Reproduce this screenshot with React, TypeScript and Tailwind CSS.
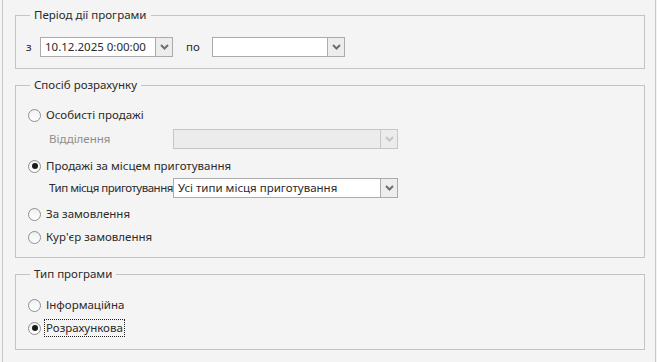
import React from "react";

const font = { fontFamily: '"Noto Sans", "Segoe UI", sans-serif' };

function Chevron({ disabled }: { disabled?: boolean }) {
  return (
    <svg width="9" height="6" viewBox="0 0 9 6">
      <path
        d="M1 1 L4.5 4.5 L8 1"
        fill="none"
        stroke={disabled ? "#c4c4c4" : "#6e6e6e"}
        strokeWidth="2"
      />
    </svg>
  );
}

function Combo({
  value,
  width,
  disabled,
}: {
  value?: string;
  width: number;
  disabled?: boolean;
}) {
  return (
    <div
      className={`flex h-[20px] border ${
        disabled ? "border-[#c6c6c6] bg-[#ececec]" : "border-[#ababab] bg-white"
      }`}
      style={{ width }}
    >
      <div className="flex-1 flex items-center pl-[4px] text-[11.5px] text-[#2a2a2a] leading-none whitespace-nowrap overflow-hidden">
        {value}
      </div>
      <div
        className={`w-[17px] flex items-center justify-center border-l ${
          disabled ? "border-[#c6c6c6] bg-[#ececec]" : "border-[#ababab] bg-[#ededed]"
        }`}
      >
        <Chevron disabled={disabled} />
      </div>
    </div>
  );
}

function Radio({
  label,
  checked,
  focused,
}: {
  label: string;
  checked?: boolean;
  focused?: boolean;
}) {
  return (
    <div className="flex items-center h-[20px]">
      <div className="w-[13px] h-[13px] rounded-full border border-[#8f8f8f] bg-gradient-to-b from-[#f0f0f0] to-white flex items-center justify-center">
        {checked && <div className="w-[6px] h-[6px] rounded-full bg-[#1a1a1a]" />}
      </div>
      <span
        className={`ml-[3px] text-[11.5px] text-[#2a2a2a] leading-none ${
          focused ? "border border-dotted border-[#222] px-[1px] py-[2px]" : "px-[2px]"
        }`}
      >
        {label}
      </span>
    </div>
  );
}

function Group({
  title,
  className,
  children,
}: {
  title: string;
  className?: string;
  children: React.ReactNode;
}) {
  return (
    <div className={`relative border border-[#c4c4c4] ${className ?? ""}`}>
      <span className="absolute left-[14px] -top-[9px] px-[4px] bg-[#f4f4f4] text-[11.5px] leading-[16px] text-[#2a2a2a]">
        {title}
      </span>
      {children}
    </div>
  );
}

export default function App() {
  return (
    <div className="w-[657px] h-[362px] bg-[#f4f4f4] overflow-hidden" style={font}>
      <div className="ml-[2px] w-[654px] h-[362px] border-l border-r border-[#c8c8c8] pl-[12px] pr-[10px] pt-[15px]">
        <Group title="Період дії програми" className="pt-[21px] pb-[11px]">
          <div className="flex items-center h-[20px]">
            <span className="ml-[10px] w-[14px] text-[11.5px] text-[#2a2a2a] leading-none">з</span>
            <Combo value="10.12.2025 0:00:00" width={133} />
            <span className="ml-[13px] w-[26px] text-[11.5px] text-[#2a2a2a] leading-none">по</span>
            <Combo width={133} />
          </div>
        </Group>

        <Group title="Спосіб розрахунку" className="mt-[16px] pt-[19px] pb-[10px] pl-[12px]">
          <Radio label="Особисті продажі" />
          <div className="mt-[4px] flex items-center h-[20px]">
            <span className="ml-[21px] w-[124px] text-[11.5px] text-[#8d8d8d] leading-none">Відділення</span>
            <Combo width={225} disabled />
          </div>
          <div className="mt-[7px]">
            <Radio label="Продажі за місцем приготування" checked />
          </div>
          <div className="mt-[2px] flex items-center h-[20px]">
            <span className="ml-[21px] w-[124px] text-[11.5px] tracking-[-0.5px] text-[#2a2a2a] leading-none whitespace-nowrap">
              Тип місця приготування
            </span>
            <Combo value="Усі типи місця приготування" width={225} />
          </div>
          <div className="mt-[6px]">
            <Radio label="За замовлення" />
          </div>
          <div className="mt-[3px]">
            <Radio label="Кур'єр замовлення" />
          </div>
        </Group>

        <Group title="Тип програми" className="mt-[16px] pt-[20px] pb-[11px] pl-[12px]">
          <Radio label="Інформаційна" />
          <div className="mt-[3px]">
            <Radio label="Розрахункова" checked focused />
          </div>
        </Group>
      </div>
    </div>
  );
}
